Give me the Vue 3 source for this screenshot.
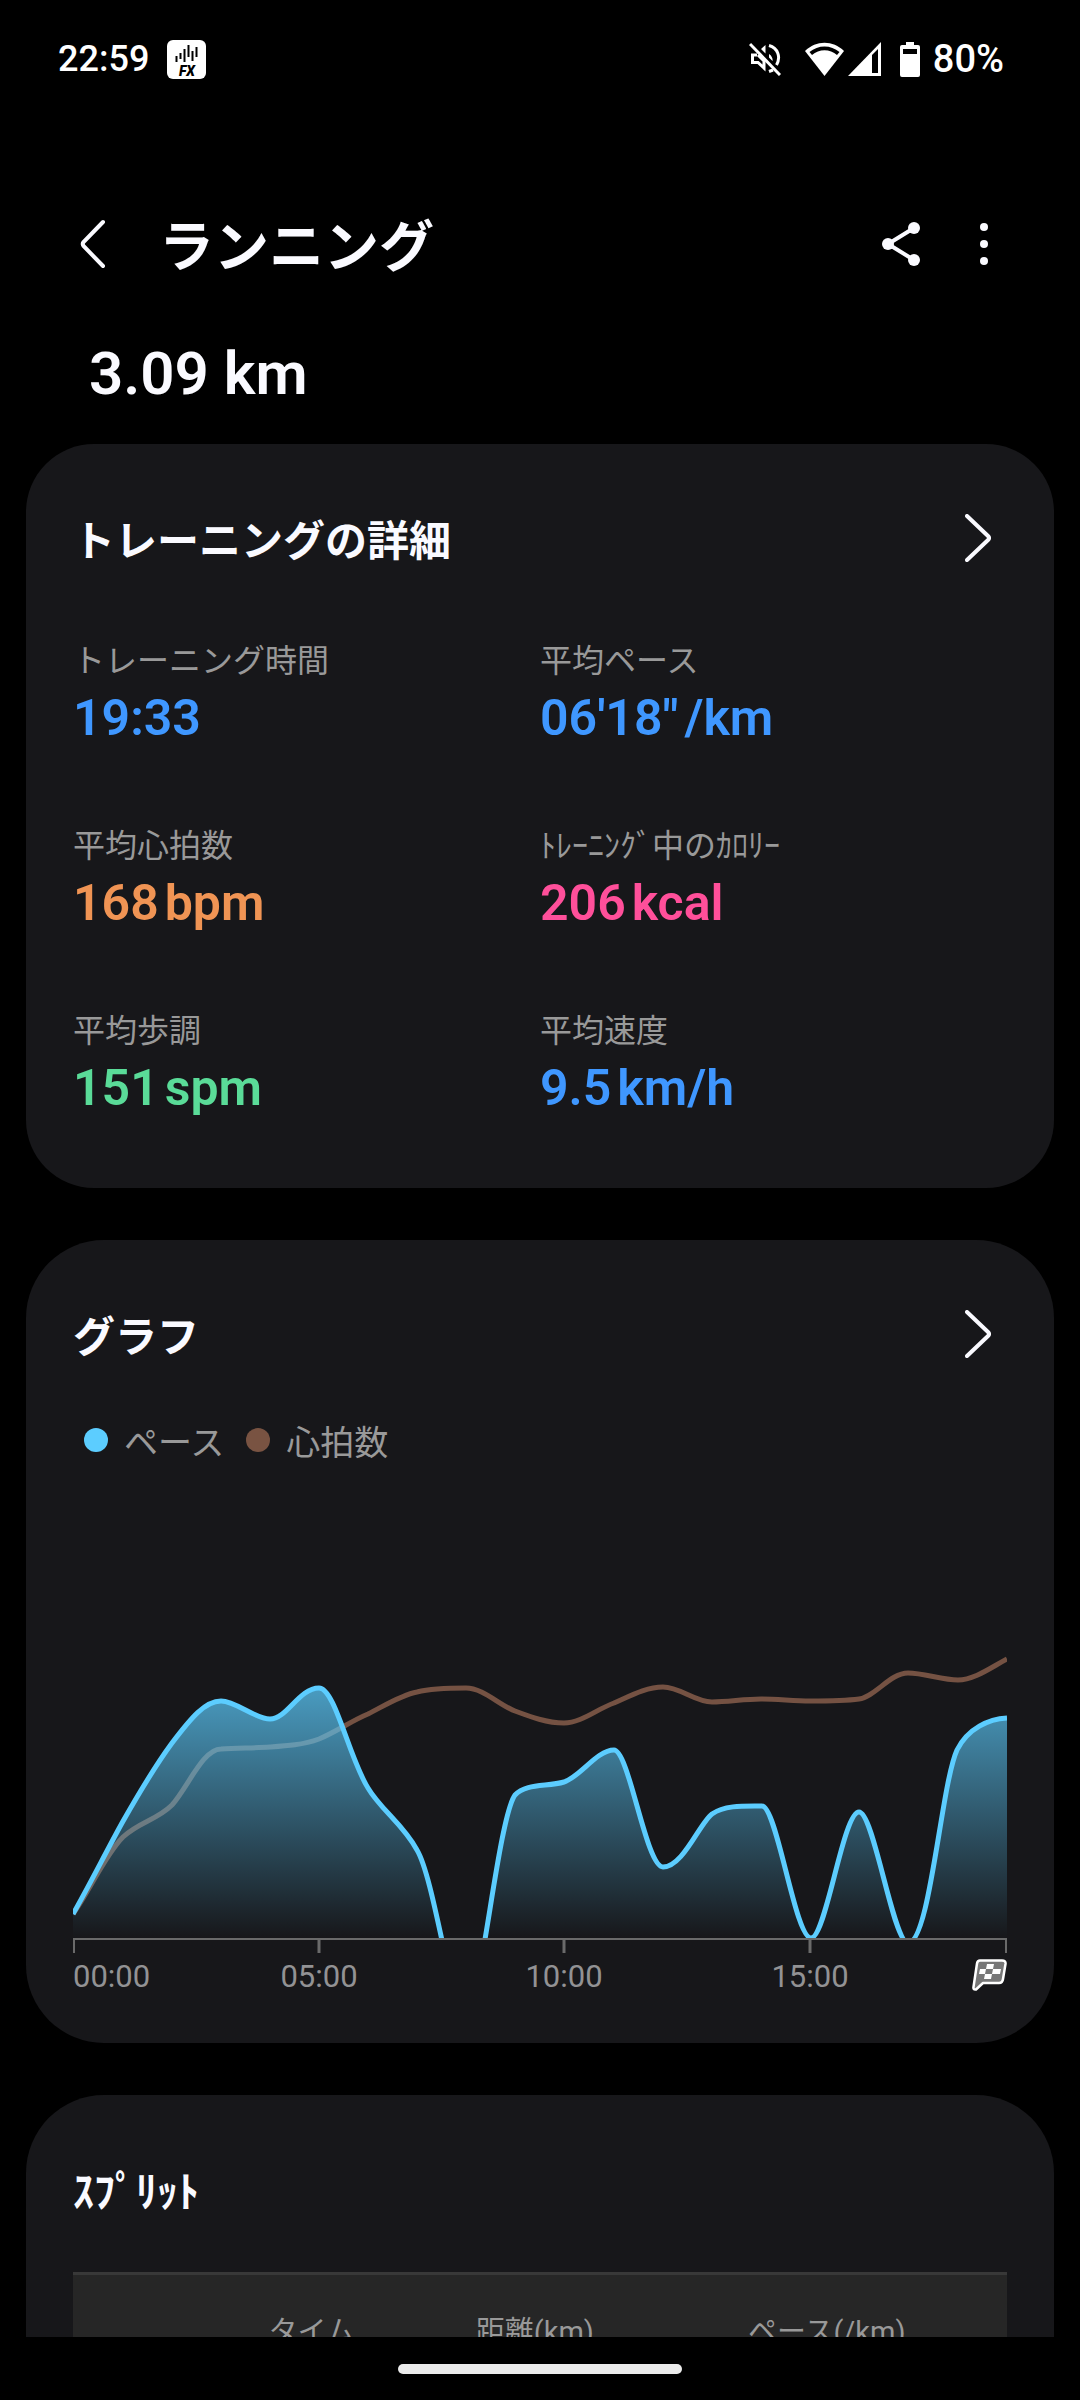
<script setup>
const stats = [
  { label: 'トレーニング時間', value: '19:33', unit: '', tone: 'blue' },
  { label: '平均ペース', value: '06\'18"', unit: '/km', tone: 'blue' },
  { label: '平均心拍数', value: '168', unit: 'bpm', tone: 'orange' },
  { label: 'ﾄﾚｰﾆﾝｸﾞ中のｶﾛﾘｰ', value: '206', unit: 'kcal', tone: 'pink' },
  { label: '平均歩調', value: '151', unit: 'spm', tone: 'green' },
  { label: '平均速度', value: '9.5', unit: 'km/h', tone: 'blue' },
]

const legend = [
  { label: 'ペース', series: 'pace' },
  { label: '心拍数', series: 'heart' },
]

const ticks = [
  { x: 246, label: '05:00' },
  { x: 491, label: '10:00' },
  { x: 737, label: '15:00' },
]

const pace =
  'M0 274C16 246 33 212 49 183C66 153 82 126 99 103C118 78 132 61 148 61C163 61 182 79 197 79' +
  'C214 79 226 48 246 48C262 48 276 118 295 148C308 170 330 184 344 210C353 225 362 268 370 305' +
  'C380 340 385 360 393 360C402 360 406 340 411 305C419 260 431 170 442 155C453 143 474 147 491 142' +
  'C507 137 524 110 541 110C556 110 573 227 590 227C610 227 626 184 639 174C652 165 671 166 689 166' +
  'C704 166 722 298 738 298C753 298 770 172 786 172C801 172 820 303 835 303C857 303 868 145 884 110' +
  'C895 88 916 79 934 78'

const heart =
  'M0 274C16 252 32 215 50 197C66 182 84 180 99 165C115 147 130 109 148 109C164 108 180 108 197 107' +
  'C213 106 230 105 246 99C263 92 278 81 295 74C311 66 328 55 344 52C360 48 380 48 393 48' +
  'C410 48 426 65 442 71C458 77 474 83 491 83C508 83 524 69 541 63C557 56 573 47 590 47' +
  'C607 47 622 62 639 62C655 62 671 59 688 59C704 59 721 61 737 61C754 61 771 61 786 59' +
  'C802 57 817 33 835 33C851 33 869 40 885 40C901 40 917 28 934 19'
</script>

<template>
  <div class="screen">
    <div class="status">
      <div class="status-group">
        <span class="clock">22:59</span>
        <svg class="fx" width="39" height="39" viewBox="0 0 39 39" aria-hidden="true">
          <rect width="39" height="39" rx="6" fill="#fff" />
          <path d="M9.500 16v6M13.500 13v6M17.500 9v13M21.500 5v12M25.500 11v10M29.500 7v10" stroke="#000" stroke-width="2" />
          <text x="20" y="36" text-anchor="middle">FX</text>
        </svg>
      </div>
      <div class="status-group">
        <svg class="mute" width="32" height="34" viewBox="0 0 32 34" fill="none" stroke="#fff" aria-hidden="true">
          <path d="M8 13H3.500V20.500H9L15 26V19L9 13" stroke-width="3" />
          <path d="M12 7L16.500 3V11.500ZM20 12C23 14 24 17 23.500 19L20 15.500Z" fill="#fff" stroke="none" />
          <path d="M20 3.500C29 6 32 15 27.500 23M20 29.500L24 28" stroke-width="3" />
          <path d="M1 2L31 33" stroke-width="3" />
        </svg>
        <svg class="wifi" width="39" height="34" viewBox="0 0 39 34" aria-hidden="true">
          <path d="M0 9C11-2 28-2 39 9L19.500 34Z" fill="#fff" />
          <path d="M4.500 10C13 2.500 26 2.500 34.500 10L32 13C25 6.500 14 6.500 7 13Z" fill="#000" />
        </svg>
        <svg class="signal" width="33" height="34" viewBox="0 0 33 34" aria-hidden="true">
          <path d="M33 0V34H0Z" fill="#fff" />
          <path d="M24 13L30 7V31H24Z" fill="#000" />
        </svg>
        <svg class="battery" width="20" height="35" viewBox="0 0 20 35" aria-hidden="true">
          <path d="M6 0h8v3h4a2 2 0 0 1 2 2v28a2 2 0 0 1-2 2H2a2 2 0 0 1-2-2V5a2 2 0 0 1 2-2h4Z" fill="#fff" />
          <path d="M3 7h14v5H3Z" fill="#000" />
        </svg>
        <span class="clock charge">80%</span>
      </div>
    </div>

    <header class="app-bar">
      <button class="icon-button back" type="button" aria-label="戻る">
        <svg width="26" height="50" viewBox="0 0 26 50"><path d="M23 3L3.500 23Q2 25 3.500 27L23 47" /></svg>
      </button>
      <h1>ランニング</h1>
      <button class="icon-button share" type="button" aria-label="共有">
        <svg width="38" height="44" viewBox="0 0 38 44">
          <path d="M32 6L6 22L32 38" />
          <g fill="#fafaff" stroke="none"><circle cx="32" cy="6" r="6" /><circle cx="6" cy="22" r="6" /><circle cx="32" cy="38" r="6" /></g>
        </svg>
      </button>
      <button class="icon-button more" type="button" aria-label="その他">
        <svg width="8" height="42" viewBox="0 0 8 42">
          <g fill="#fafaff" stroke="none"><circle cx="4" cy="4" r="4" /><circle cx="4" cy="21" r="4" /><circle cx="4" cy="38" r="4" /></g>
        </svg>
      </button>
    </header>

    <main class="content">
      <p class="distance">3.09 km</p>

      <section class="card details">
        <div class="card-head">
          <h2>トレーニングの詳細</h2>
          <button class="icon-button" type="button" aria-label="トレーニングの詳細">
            <svg width="26" height="48" viewBox="0 0 26 48"><path d="M2 2L23 22Q25 24 23 26L2 46" /></svg>
          </button>
        </div>
        <dl class="stats">
          <div v-for="s in stats" :key="s.label">
            <dt>{{ s.label }}</dt>
            <dd :class="s.tone">{{ s.value }}<span v-if="s.unit" class="unit">{{ s.unit }}</span></dd>
          </div>
        </dl>
      </section>

      <section class="card">
        <div class="card-head">
          <h2>グラフ</h2>
          <button class="icon-button" type="button" aria-label="グラフ">
            <svg width="26" height="48" viewBox="0 0 26 48"><path d="M2 2L23 22Q25 24 23 26L2 46" /></svg>
          </button>
        </div>
        <ul class="legend">
          <li v-for="l in legend" :key="l.series"><i class="dot" :class="l.series"></i><span>{{ l.label }}</span></li>
        </ul>
        <svg class="chart" viewBox="0 -160 934 522" role="img" aria-label="ペースと心拍数">
          <defs>
            <linearGradient id="pace-fill" gradientUnits="userSpaceOnUse" x1="0" y1="48" x2="0" y2="298">
              <stop offset="0" stop-color="#5ccdff" stop-opacity="0.73" />
              <stop offset="1" stop-color="#5ccdff" stop-opacity="0" />
            </linearGradient>
            <clipPath id="plot"><rect x="0" y="-160" width="934" height="458" /></clipPath>
          </defs>
          <g clip-path="url(#plot)">
            <path class="line heart-line" :d="heart" />
            <path :d="pace + 'V400H0Z'" fill="url(#pace-fill)" />
            <path class="line pace-line" :d="pace" />
          </g>
          <path class="axis" d="M0 299H934" />
          <path class="axis" d="M1 300V313M933 300V313" />
          <text x="0" y="347">00:00</text>
          <g v-for="t in ticks" :key="t.label">
            <path class="tick" :d="`M${t.x} 300V313`" />
            <text :x="t.x" y="347" text-anchor="middle">{{ t.label }}</text>
          </g>
          <g transform="translate(899 319)">
            <path d="M8 1.500H30Q34 1.500 33.500 5L31 20Q30.500 24 27 24H11L4 30.500Q1 31 1.500 28L5 4.500Q5.500 1.500 8 1.500Z" fill="#777" stroke="#fff" stroke-width="2.500" stroke-linejoin="round" />
            <path d="M15 5h7l-1 5h-7ZM8 10h6l-1 5H7ZM21 10h8l-1 5h-8ZM13 15h7l-1 5h-7Z" fill="#fff" />
          </g>
        </svg>
      </section>

      <section class="card">
        <div class="card-head"><h2>ｽﾌﾟﾘｯﾄ</h2></div>
        <div class="splits">
          <table>
            <colgroup><col class="c-no" /><col class="c-mid" /><col class="c-mid" /><col /></colgroup>
            <thead>
              <tr>
                <td></td>
                <th scope="col">タイム</th>
                <th scope="col">距離(km)</th>
                <th scope="col">ペース(/km)</th>
              </tr>
            </thead>
          </table>
        </div>
      </section>
    </main>

    <div class="nav"><span class="home"></span></div>
  </div>
</template>

<style>
body {
  margin: 0;
  background: #000;
}
</style>

<style scoped>
.screen {
  display: flex;
  flex-direction: column;
  height: 100vh;
  background: #000;
  color: #fafaff;
  font-family: Roboto, "Noto Sans CJK JP", sans-serif;
}
.status {
  flex: none;
  display: flex;
  justify-content: space-between;
  align-items: center;
  height: 118px;
  padding: 0 76px 0 58px;
}
.status-group {
  display: flex;
  align-items: center;
}
.clock {
  font: 500 36px/44px Roboto, sans-serif;
  color: #fff;
}
.charge {
  font-size: 38px;
}
.fx {
  margin-left: 18px;
}
.fx text {
  font: italic 900 14px Roboto, sans-serif;
}
.wifi {
  margin-left: 24px;
}
.signal {
  margin-left: 4px;
}
.battery {
  margin: 0 13px 0 19px;
}
.icon-button {
  display: flex;
  padding: 0;
  border: 0;
  background: none;
}
.icon-button svg {
  fill: none;
  stroke: #fafaff;
  stroke-width: 4;
  stroke-linecap: round;
}
.app-bar {
  flex: none;
  display: flex;
  align-items: center;
  height: 112px;
  margin-top: 70px;
  padding: 0 92px 0 80px;
}
h1 {
  flex: 1;
  margin: 0 0 0 53px;
  padding-top: 6px;
  font-size: 55px;
  line-height: 72px;
  font-weight: 700;
}
.share {
  margin-right: 60px;
}
.content {
  flex: 1;
  min-height: 0;
  overflow: hidden;
  padding: 38px 26px 0;
}
.distance {
  margin: 0 0 34px 63px;
  font-size: 60px;
  line-height: 72px;
  font-weight: 600;
}
.card {
  margin-bottom: 52px;
  padding: 62px 47px 41px;
  border-radius: 78px;
  background: #17171a;
}
.details {
  padding-bottom: 67px;
  border-radius: 68px;
}
.card-head {
  display: flex;
  justify-content: space-between;
  align-items: center;
  height: 64px;
  padding-right: 16px;
}
h2 {
  margin: 0;
  padding-top: 8px;
  font-size: 42px;
  line-height: 64px;
  font-weight: 700;
}
.stats {
  display: grid;
  grid-template-columns: 1fr 1fr;
  row-gap: 71px;
  margin: 67px 0 0;
}
dt {
  color: #999;
  font-size: 32px;
  line-height: 48px;
}
dd {
  margin: 0;
  font-size: 50px;
  line-height: 66px;
  font-weight: 600;
}
.unit {
  margin-left: 6px;
}
.blue {
  color: #3f97ff;
}
.orange {
  color: #f09454;
}
.pink {
  color: #ff4f9a;
}
.green {
  color: #5adb98;
}
.legend {
  display: flex;
  gap: 22px;
  margin: 47px 0 13px;
  padding: 0 0 0 11px;
  list-style: none;
  color: #999;
  font-size: 34px;
  line-height: 48px;
}
.legend li {
  display: flex;
  align-items: center;
}
.legend span {
  padding-top: 6px;
}
.dot {
  width: 24px;
  height: 24px;
  margin-right: 16px;
  border-radius: 50%;
}
.dot.pace {
  background: #5ccdff;
}
.dot.heart {
  background: #795342;
}
.chart {
  display: block;
  width: 100%;
}
.chart text {
  fill: #929294;
  font-size: 31px;
}
.line {
  fill: none;
  stroke-width: 5;
}
.heart-line {
  stroke: #755243;
}
.pace-line {
  stroke: #5ccdff;
}
.axis {
  stroke: #6a6a6a;
  stroke-width: 2;
}
.tick {
  stroke: #6a6a6a;
  stroke-width: 3;
}
.splits {
  margin-top: 51px;
  border-top: 3px solid #383838;
  background: #262626;
}
table {
  width: 100%;
  table-layout: fixed;
  border-collapse: collapse;
}
.c-no {
  width: 13.6%;
}
.c-mid {
  width: 23.9%;
}
th {
  padding: 37px 0;
  color: #999;
  font-size: 29px;
  line-height: 40px;
  font-weight: 400;
}
.nav {
  flex: none;
  display: flex;
  justify-content: center;
  align-items: center;
  height: 63px;
}
.home {
  width: 284px;
  height: 10px;
  border-radius: 5px;
  background: #ebebeb;
}
</style>
